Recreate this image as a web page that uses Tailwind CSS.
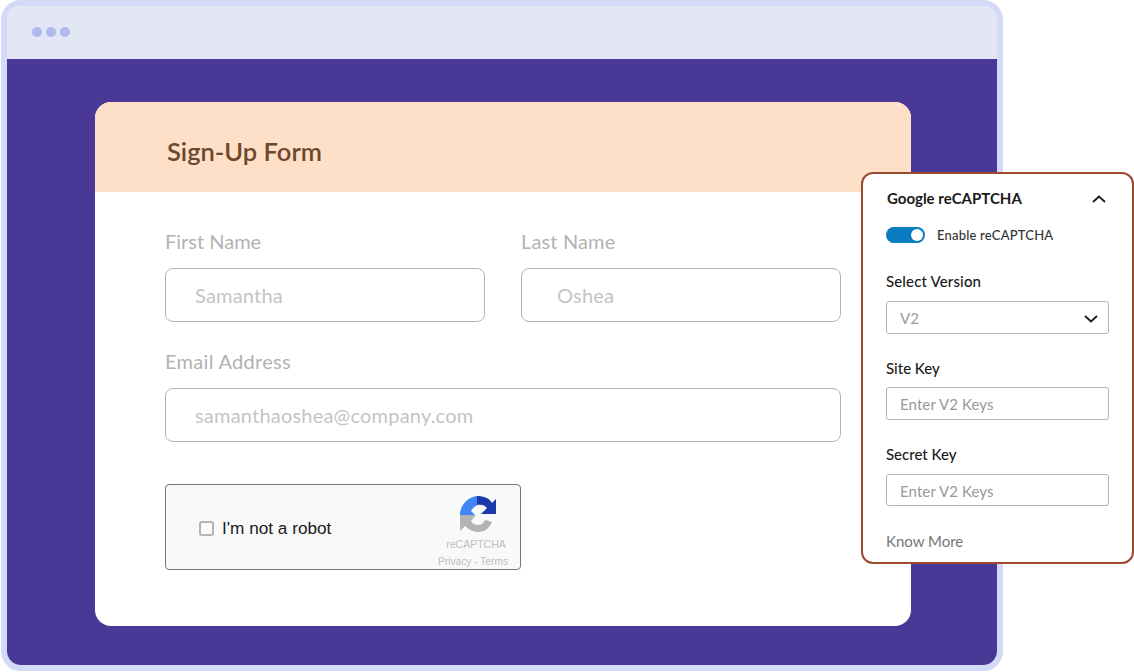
<!DOCTYPE html>
<html lang="en">
<head>
<meta charset="utf-8">
<title>Sign-Up Form</title>
<script src="https://cdn.jsdelivr.net/npm/@tailwindcss/browser@4"></script>
</head>
<body class="bg-white font-['Lato','Open_Sans',sans-serif]">
<div class="relative w-[1134px] h-[672px] overflow-hidden">
  <div class="ml-px w-[1002px] h-[671px] border-[6px] border-[#d3daf8] rounded-[20px] overflow-hidden flex flex-col">
    <div class="h-[53px] bg-[#e2e6f5] flex items-center gap-[4px] pl-[25px] pb-[1px]">
      <span class="w-[10px] h-[10px] rounded-full bg-[#b0b9ec]"></span>
      <span class="w-[10px] h-[10px] rounded-full bg-[#b0b9ec]"></span>
      <span class="w-[10px] h-[10px] rounded-full bg-[#b0b9ec]"></span>
    </div>
    <div class="flex-1 bg-[#4a3896] pt-[43px] pl-[88px]">
      <div class="w-[816px] h-[524px] bg-white rounded-[16px] overflow-hidden">
        <div class="h-[90px] bg-[#fedfc8] flex items-center pl-[72px] pt-[10px]">
          <h1 class="text-[25.5px] font-semibold text-[#6f472d] leading-none">Sign-Up Form</h1>
        </div>
        <div class="pl-[70px] pr-[70px] pt-[38px]">
          <div class="grid grid-cols-2 gap-x-[36px]">
            <div>
              <div class="text-[20px] leading-[22px] text-[#b3b3b3]">First Name</div>
              <div class="mt-[16px] h-[54px] border border-[#b3b3b3] rounded-[8px] flex items-center pl-[29px] text-[20px] tracking-[0.2px] text-[#c4c4c4]">Samantha</div>
            </div>
            <div>
              <div class="text-[20px] tracking-[0.15px] leading-[22px] text-[#b3b3b3]">Last Name</div>
              <div class="mt-[16px] h-[54px] border border-[#b3b3b3] rounded-[8px] flex items-center pl-[35px] text-[20px] tracking-[0.2px] text-[#c4c4c4]">Oshea</div>
            </div>
          </div>
          <div class="mt-[28px] text-[20px] tracking-[0.3px] leading-[22px] text-[#b3b3b3]">Email Address</div>
          <div class="mt-[16px] h-[54px] border border-[#b3b3b3] rounded-[8px] flex items-center pl-[29px] text-[20px] tracking-[0.2px] text-[#c4c4c4]">samanthaoshea@company.com</div>
          <div class="mt-[42px] w-[356px] h-[86px] border border-[#777777] rounded-[4px] bg-[#f9f9f9] flex font-['Liberation_Sans',sans-serif]">
            <div class="flex items-center pl-[33px] flex-1 pt-[3px]">
              <span class="w-[15px] h-[15px] border-2 border-[#b4b4b4] rounded-[3px] bg-[#fbfbfb]"></span>
              <span class="ml-[8px] text-[17.2px] text-[#1a1a1a]">I'm not a robot</span>
            </div>
            <div class="w-[90px] flex flex-col items-center pt-[11px] pr-[7px]">
              <svg width="36" height="36" viewBox="0 0 36 36" class="ml-[12px] shrink-0">
                <path fill="#b3b3b3" d="M0 19V35L5 30C8 33 13 36 18 36 24 36 29 33 32 26L25 24C23 28 21 29 18 29 15 29 13 28 11 25L16 19Z"/>
                <path fill="#4285f4" d="M0 19C0 9 8 1 17 0V9L16 10C14 11 12 13 11 15L15 19Z"/>
                <path fill="#1c3aa9" d="M17 0C24 0 29 2 32 7L36 3V18H21L27 12C25 9 21 8 17 9Z"/>
              </svg>
              <div class="text-[10.5px] leading-[12px] text-[#bdbdbd] mt-[6px] ml-[9px] whitespace-nowrap">reCAPTCHA</div>
              <div class="text-[10.2px] leading-[12px] text-[#bdbdbd] mt-[6px] whitespace-nowrap ml-[3px]">Privacy - Terms</div>
            </div>
          </div>
        </div>
      </div>
    </div>
  </div>

  <div class="absolute left-[861px] top-[172px] w-[273px] h-[392px] bg-white border-2 border-[#9b4a2f] rounded-[12px] pl-[23px] pr-[23px] pt-[14px]">
    <div class="flex items-center justify-between h-[20px] pl-[1px] pr-[2px]">
      <span class="text-[15px] font-bold text-[#1a1a1a] leading-none">Google reCAPTCHA</span>
      <svg width="16" height="10" viewBox="0 0 16 10" fill="none" stroke="#1a1a1a" stroke-width="1.8" class="mt-[2px]"><path d="M2 8L8 2.5L14 8"/></svg>
    </div>
    <div class="mt-[19px] flex items-center h-[16px]">
      <span class="w-[39px] h-[16px] rounded-full bg-[#0a7cc1] flex items-center justify-end pr-[2px]"><span class="w-[12px] h-[12px] rounded-full bg-white"></span></span>
      <span class="ml-[12px] pt-[2px] text-[13px] tracking-[0.2px] text-[#333333] font-medium">Enable reCAPTCHA</span>
    </div>
    <div class="mt-[29px] text-[15px] tracking-[0.15px] leading-[18px] text-[#1a1a1a] font-medium">Select Version</div>
    <div class="mt-[11px] h-[33px] border border-[#b5b5b5] rounded-[3px] flex items-center justify-between pl-[13px] pr-[10px] pt-[2px] text-[15px] text-[#999999]">
      <span>V2</span>
      <svg width="14" height="8" viewBox="0 0 14 8" fill="none" stroke="#1a1a1a" stroke-width="1.8"><path d="M1 1L7 6.5L13 1"/></svg>
    </div>
    <div class="mt-[25px] text-[15px] leading-[18px] text-[#1a1a1a] font-medium">Site Key</div>
    <div class="mt-[10px] h-[33px] border border-[#b5b5b5] rounded-[3px] flex items-center pl-[13px] pt-[2px] text-[15px] tracking-[0.1px] text-[#999999]">Enter V2 Keys</div>
    <div class="mt-[25px] text-[15px] leading-[18px] text-[#1a1a1a] font-medium">Secret Key</div>
    <div class="mt-[11px] h-[32px] border border-[#b5b5b5] rounded-[3px] flex items-center pl-[13px] pt-[2px] text-[15px] tracking-[0.1px] text-[#999999]">Enter V2 Keys</div>
    <div class="mt-[26px] text-[15px] leading-[18px] text-[#777777]">Know More</div>
  </div>
</div>
</body>
</html>
